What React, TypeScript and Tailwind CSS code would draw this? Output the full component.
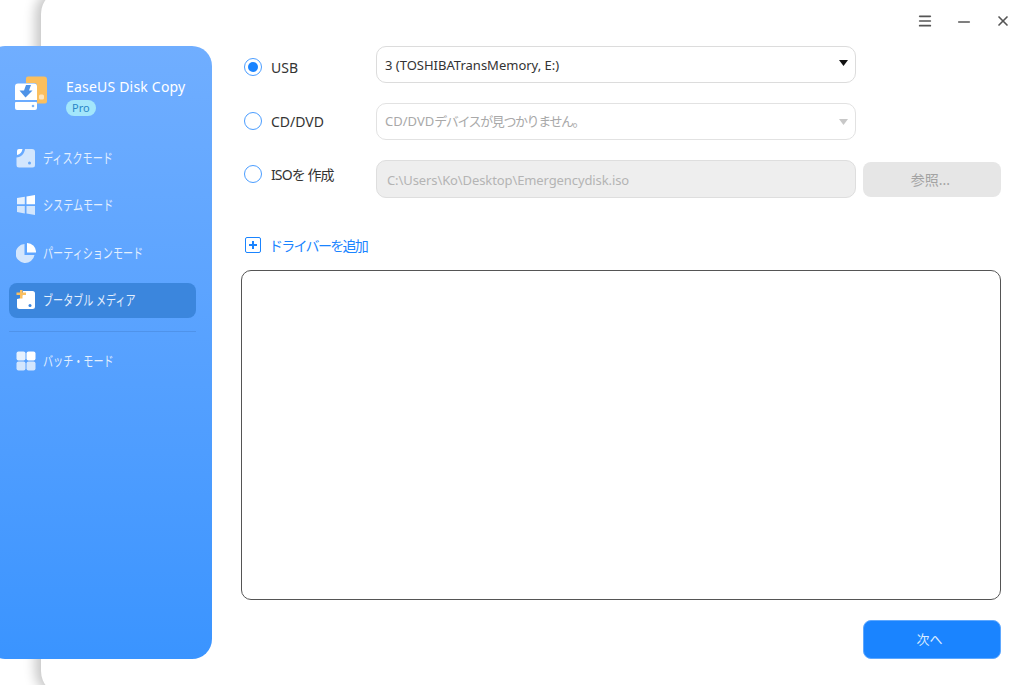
import { Menu, Minus, X } from "lucide-react";

const FONT = "font-['Noto_Sans','Noto_Sans_CJK_JP',sans-serif]";

function LogoIcon() {
  return (
    <svg width="36" height="36" viewBox="0 0 36 36">
      <path d="M12 2.500a2 2 0 0 1 2-2h16a3 3 0 0 1 3 3v22a2 2 0 0 1-2 2h-8V10a3 3 0 0 0-3-3h-8z" fill="#fbbf5e" />
      <rect x="25" y="18.500" width="5" height="5" rx="1.500" fill="#fff" opacity="0.6" />
      <path d="M1 10.500a3 3 0 0 1 3-3h16a3 3 0 0 1 3 3V24H1z" fill="#fff" />
      <path d="M12 9h5l-2 5.500h3.500l-7 7-6-7H10z" fill="#4e93e8" />
      <path d="M1 27a1 1 0 0 1 1-1h20a1 1 0 0 1 1 1v5a2 2 0 0 1-2 2H3a2 2 0 0 1-2-2z" fill="#fff" />
      <circle cx="19" cy="30" r="1.300" fill="#7cb4f7" />
    </svg>
  );
}

function DiskIcon() {
  return (
    <svg width="20" height="20" viewBox="0 0 20 20">
      <path d="M3 1h13a3 3 0 0 1 3 3v13a2.500 2.500 0 0 1-2.500 2.500H3A2.500 2.500 0 0 1 .5 17V9.500C5 9 8.500 6 9 1z" fill="#d3e6fd" />
      <path d="M1 7V3a2 2 0 0 1 2-2h3.500C6 4 4 6.500 1 7z" fill="#fff" />
      <circle cx="13.500" cy="15" r="1.500" fill="#6aa9f7" />
    </svg>
  );
}

function SystemIcon() {
  return (
    <svg width="20" height="20" viewBox="0 0 20 20">
      <path d="M1 3 8.800 1.800V9.200H1z" fill="#e6f1fe" />
      <path d="M10.500 1.500 19 0v9.200h-8.500z" fill="#fff" />
      <path d="M1 11h7.800v7.400L1 17z" fill="#d3e6fd" />
      <path d="M10.500 11H19v9l-8.500-1.500z" fill="#d3e6fd" />
    </svg>
  );
}

function PartitionIcon() {
  return (
    <svg width="20" height="20" viewBox="0 0 20 20">
      <path d="M8.500 1a9.500 9.500 0 1 0 10 11H8.500z" fill="#d3e6fd" />
      <path d="M11 0a9 9 0 0 1 9 9.500h-9z" fill="#fff" />
    </svg>
  );
}

function MediaIcon() {
  return (
    <svg width="20" height="20" viewBox="0 0 20 20">
      <path d="M7 1h9.500A2.500 2.500 0 0 1 19 3.500v13a2.500 2.500 0 0 1-2.500 2.500h-13A2.500 2.500 0 0 1 1 16.500V9C5 9 7 6 7 1z" fill="#fff" />
      <circle cx="14" cy="15.500" r="1.500" fill="#3d86dd" />
      <path d="M4 -1h2.500v3.500H10V5H6.500v3.500H4V5H.5V2.500H4z" fill="#fbbf5e" />
    </svg>
  );
}

function BatchIcon() {
  return (
    <svg width="20" height="20" viewBox="0 0 20 20">
      <rect x="0.500" y="0.500" width="9" height="9" rx="2" fill="#e6f1fe" />
      <rect x="10.500" y="0.500" width="9" height="9" rx="2" fill="#fff" />
      <rect x="0.500" y="10.500" width="9" height="9" rx="2" fill="#d3e6fd" />
      <rect x="10.500" y="10.500" width="9" height="9" rx="2" fill="#d3e6fd" />
    </svg>
  );
}

function NavItem({ icon, label, active }: { icon: React.ReactNode; label: string; active?: boolean }) {
  return (
    <div className={`flex h-[35px] items-center gap-[7px] rounded-lg pl-[7px] ${active ? "bg-[#3b86dd]" : ""}`}>
      {icon}
      {/* kana runs much narrower in the original UI font */}
      <span className="inline-block origin-left scale-x-[0.72] whitespace-nowrap text-[14px] leading-[20px] text-[#e3effe]">
        {label}
      </span>
    </div>
  );
}

function Radio({ checked, label, top, tight }: { checked?: boolean; label: string; top: string; tight?: boolean }) {
  return (
    <div className={`flex w-[135px] shrink-0 items-start gap-[9px] pl-[3px] ${top}`}>
      <span className="flex h-[18px] w-[18px] items-center justify-center rounded-full border-[1.5px] border-[#4a9dff] bg-white">
        {checked && <span className="h-[10px] w-[10px] rounded-full bg-[#1a84ff]" />}
      </span>
      <span className={`mt-[1px] text-[14px] leading-[18px] text-[#333333] ${tight ? "tracking-[-0.9px]" : ""}`}>{label}</span>
    </div>
  );
}

function Caret({ color, raised }: { color: string; raised?: boolean }) {
  return (
    <svg className={raised ? "mb-[3px]" : ""} width="9" height="6" viewBox="0 0 9 6">
      <path d="M0 0h9L4.500 6z" fill={color} />
    </svg>
  );
}

export default function App() {
  return (
    <div className={`relative flex h-[685px] w-[1024px] overflow-hidden bg-white ${FONT}`}>
      {/* app window peeking out behind the sidebar */}
      <div className="absolute -top-[10px] left-[41px] h-[705px] w-[1010px] rounded-[24px] bg-white shadow-[-6px_0_12px_rgba(0,0,0,0.22)]" />

      <aside className="relative z-10 -ml-[15px] mt-[46px] flex h-[613px] w-[227px] shrink-0 flex-col rounded-[20px] bg-gradient-to-b from-[#70aeff] to-[#3a94ff] pl-[24px] pr-[16px]">
        <div className="flex h-[71px] items-start pl-[5px] pt-[30px]">
          <LogoIcon />
          <div className="ml-[16px] mt-[1px] flex flex-col items-start">
            <span className="text-[14px] leading-[20px] tracking-[0.2px] text-white">EaseUS Disk Copy</span>
            <span className="mt-[3px] rounded-full bg-[#a3e6fb] px-[6px] text-[11px] leading-[16px] text-[#2a86c8]">Pro</span>
          </div>
        </div>
        <div className="mt-[23px] flex flex-col gap-[12.5px]">
          <NavItem icon={<DiskIcon />} label="ディスクモード" />
          <NavItem icon={<SystemIcon />} label="システムモード" />
          <NavItem icon={<PartitionIcon />} label="パーティションモード" />
          <NavItem icon={<MediaIcon />} label="ブータブル メディア" active />
        </div>
        <div className="mt-[13px] h-px bg-[#4f93ea]" />
        <div className="mt-[12px]">
          <NavItem icon={<BatchIcon />} label="バッチ・モード" />
        </div>
      </aside>

      <main className="relative z-10 flex min-w-0 flex-1 flex-col pl-[29px] pr-[23px]">
        <div className="-mr-[10px] flex h-[46px] items-start justify-end gap-[22px] pt-[13px] text-[#555555]">
          <Menu size={16} strokeWidth={2.5} />
          <Minus size={18} strokeWidth={2.2} />
          <X size={16} strokeWidth={2.5} />
        </div>

        <div className="flex h-[37px] items-start">
          <Radio checked label="USB" top="pt-[12px]" />
          <div className="flex h-[37px] w-[480px] items-center justify-between rounded-[10px] border border-[#dcdcdc] pl-[8px] pr-[7px]">
            <span className="pt-[2px] text-[13px] text-[#333333]">3 (TOSHIBATransMemory, E:)</span>
            <Caret color="#111111" raised />
          </div>
        </div>

        <div className="mt-[20px] flex h-[37px] items-start">
          <Radio label="CD/DVD" top="pt-[9px]" />
          <div className="flex h-[37px] w-[480px] items-center justify-between rounded-[10px] border border-[#e2e2e2] pl-[8px] pr-[7px]">
            <span className="pt-[1px] text-[13px] text-[#a9a9a9]">
              CD/DVD<span className="tracking-[-1.4px]">デバイスが見つかりません。</span>
            </span>
            <Caret color="#c8c8c8" />
          </div>
        </div>

        <div className="mt-[20px] flex h-[38px] items-start">
          <Radio label="ISOを 作成" top="pt-[5px]" tight />
          <div className="flex h-[38px] w-[480px] items-center rounded-[10px] border border-[#dedede] bg-[#eeeeee] pl-[10px]">
            <span className="pt-[3px] text-[13px] tracking-[-0.1px] text-[#b4b4b4]">C:\Users\Ko\Desktop\Emergencydisk.iso</span>
          </div>
          <button className="ml-[7px] mt-[2px] flex h-[35px] w-[138px] items-center justify-center rounded-[8px] bg-[#e6e6e6] pr-[3px] text-[14px] text-[#a3a3a3]">
            参照...
          </button>
        </div>

        <div className="mt-[37px] flex h-[20px] items-center gap-[8px] pl-[4px]">
          <span className="flex h-[16px] w-[16px] items-center justify-center rounded-[2px] border-[1.5px] border-[#1a84ff]">
            <svg width="10" height="10" viewBox="0 0 10 10">
              <path d="M4 1h2v3h3v2H6v3H4V6H1V4h3z" fill="#1a84ff" />
            </svg>
          </span>
          <span className="text-[14px] tracking-[-1.7px] text-[#1a84ff]">ドライバーを追加</span>
        </div>

        <div className="mt-[15px] h-[330px] rounded-[10px] border border-[#555555] bg-white" />

        <div className="mt-[20px] flex justify-end">
          <button className="h-[39px] w-[138px] rounded-[8px] border border-[#5ea8ff] bg-[#1a84ff] pr-[5px] text-[13px] text-[#dcecff]">
            次へ
          </button>
        </div>
      </main>
    </div>
  );
}
